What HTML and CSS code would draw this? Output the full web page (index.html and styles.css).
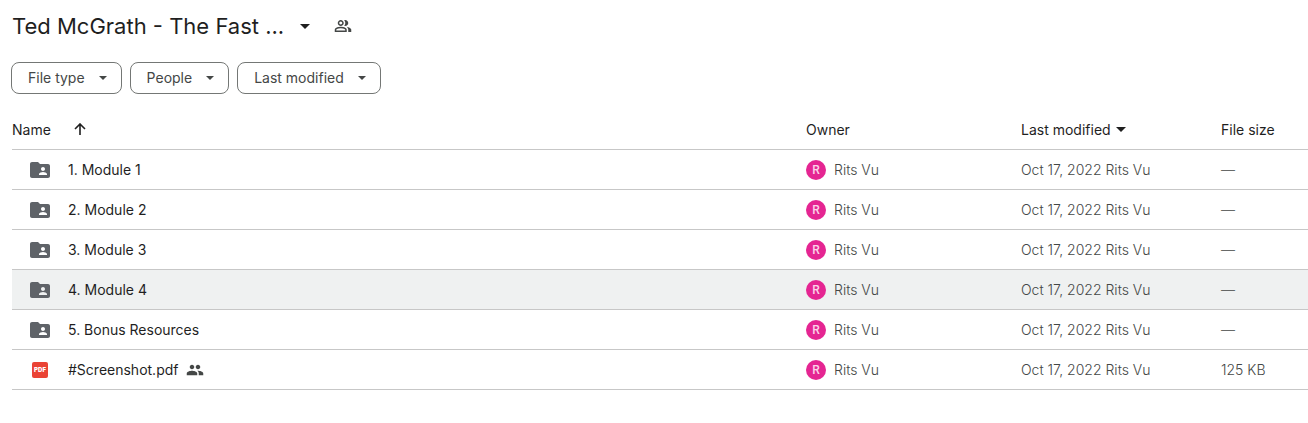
FILE: index.html
```html
<!DOCTYPE html>
<html lang="en">
<head>
<meta charset="utf-8">
<meta name="viewport" content="width=device-width, initial-scale=1">
<title>Ted McGrath - The Fast ...</title>
<link rel="stylesheet" href="styles.css">
</head>
<body>
<svg class="sprite" aria-hidden="true">
  <symbol id="folder" viewBox="0 0 24 24"><path d="M20 6h-8l-2-2H4c-1.100 0-2 .9-2 2v12c0 1.100.9 2 2 2h16c1.100 0 2-.9 2-2V8c0-1.100-.9-2-2-2zm-5 3c1.100 0 2 .9 2 2s-.9 2-2 2-2-.9-2-2 .9-2 2-2zm4 8h-8v-1c0-1.330 2.670-2 4-2s4 .67 4 2v1z"/></symbol>
  <symbol id="caret" viewBox="0 0 10 5"><path d="M0 0h10L5 5z"/></symbol>
</svg>
<main class="drive">
  <header class="heading">
    <h1 class="title"><button class="title-button" type="button">Ted McGrath - The Fast ...<svg class="caret caret-title" aria-hidden="true"><use href="#caret"/></svg></button></h1>
    <button class="share" type="button" aria-label="Manage access"><svg class="share-icon" viewBox="0 -960 960 960" aria-hidden="true"><path d="M40-160v-112q0-34 17.500-62.500T104-378q62-31 126-46.500T360-440q66 0 130 15.500T616-378q29 15 46.500 43.500T680-272v112H40Zm720 0v-120q0-44-24.500-84.500T666-434q51 6 96 20.500t84 35.500q36 20 55 44.500t19 53.500v120H760ZM360-480q-66 0-113-47t-47-113q0-66 47-113t113-47q66 0 113 47t47 113q0 66-47 113t-113 47Zm400-160q0 66-47 113t-113 47q-11 0-28-2.500t-28-5.500q27-32 41.500-71t14.500-81q0-42-14.500-81T544-792q14-5 28-6.500t28-1.500q66 0 113 47t47 113ZM120-240h480v-32q0-11-5.500-20T580-306q-54-27-109-40.500T360-360q-56 0-111 13.500T140-306q-9 5-14.500 14t-5.500 20v32Zm240-320q33 0 56.500-23.500T440-640q0-33-23.500-56.500T360-720q-33 0-56.500 23.500T280-640q0 33 23.500 56.500T360-560Z"/></svg></button>
  </header>
  <div class="filters">
    <button class="chip" type="button">File type<svg class="caret caret-chip" aria-hidden="true"><use href="#caret"/></svg></button>
    <button class="chip" type="button">People<svg class="caret caret-chip" aria-hidden="true"><use href="#caret"/></svg></button>
    <button class="chip" type="button">Last modified<svg class="caret caret-chip" aria-hidden="true"><use href="#caret"/></svg></button>
  </div>
  <table class="files">
    <colgroup><col><col class="col-owner"><col class="col-modified"><col class="col-size"></colgroup>
    <thead>
      <tr>
        <th scope="col"><button class="sort sort-name" type="button">Name<svg class="arrow" viewBox="0 0 12 14" aria-hidden="true"><path d="M6 12V1M1 6l5-5 5 5"/></svg></button></th>
        <th scope="col">Owner</th>
        <th scope="col"><button class="sort" type="button">Last modified<svg class="caret caret-title" aria-hidden="true"><use href="#caret"/></svg></button></th>
        <th scope="col">File size</th>
      </tr>
    </thead>
    <tbody>
      <tr>
        <td><div class="name"><svg class="folder" aria-hidden="true"><use href="#folder"/></svg>1. Module 1</div></td>
        <td><div class="owner"><span class="avatar" aria-hidden="true">R</span>Rits Vu</div></td>
        <td><div class="modified"><span>Oct 17, 2022</span><span>Rits Vu</span></div></td>
        <td>—</td>
      </tr>
      <tr>
        <td><div class="name"><svg class="folder" aria-hidden="true"><use href="#folder"/></svg>2. Module 2</div></td>
        <td><div class="owner"><span class="avatar" aria-hidden="true">R</span>Rits Vu</div></td>
        <td><div class="modified"><span>Oct 17, 2022</span><span>Rits Vu</span></div></td>
        <td>—</td>
      </tr>
      <tr>
        <td><div class="name"><svg class="folder" aria-hidden="true"><use href="#folder"/></svg>3. Module 3</div></td>
        <td><div class="owner"><span class="avatar" aria-hidden="true">R</span>Rits Vu</div></td>
        <td><div class="modified"><span>Oct 17, 2022</span><span>Rits Vu</span></div></td>
        <td>—</td>
      </tr>
      <tr class="active">
        <td><div class="name"><svg class="folder" aria-hidden="true"><use href="#folder"/></svg>4. Module 4</div></td>
        <td><div class="owner"><span class="avatar" aria-hidden="true">R</span>Rits Vu</div></td>
        <td><div class="modified"><span>Oct 17, 2022</span><span>Rits Vu</span></div></td>
        <td>—</td>
      </tr>
      <tr>
        <td><div class="name"><svg class="folder" aria-hidden="true"><use href="#folder"/></svg>5. Bonus Resources</div></td>
        <td><div class="owner"><span class="avatar" aria-hidden="true">R</span>Rits Vu</div></td>
        <td><div class="modified"><span>Oct 17, 2022</span><span>Rits Vu</span></div></td>
        <td>—</td>
      </tr>
      <tr>
        <td><div class="name"><span class="pdf" aria-hidden="true">PDF</span>#Screenshot.pdf<svg class="people" viewBox="0 0 24 24" role="img" aria-label="Shared"><path d="M16 11c1.660 0 2.990-1.340 2.990-3S17.660 5 16 5s-3 1.340-3 3 1.340 3 3 3zm-8 0c1.660 0 2.990-1.340 2.990-3S9.660 5 8 5 5 6.340 5 8s1.340 3 3 3zm0 2c-2.330 0-7 1.170-7 3.500V19h14v-2.500c0-2.330-4.670-3.500-7-3.500zm8 0c-.29 0-.62.02-.97.05 1.160.84 1.970 1.970 1.970 3.450V19h6v-2.500c0-2.330-4.670-3.500-7-3.500z"/></svg></div></td>
        <td><div class="owner"><span class="avatar" aria-hidden="true">R</span>Rits Vu</div></td>
        <td><div class="modified"><span>Oct 17, 2022</span><span>Rits Vu</span></div></td>
        <td>125 KB</td>
      </tr>
    </tbody>
  </table>
</main>
</body>
</html>
```
FILE: styles.css
```css
* { box-sizing: border-box; }

body {
  margin: 0;
  background: #fff;
  color: #1f1f1f;
  font: 400 14px/20px Inter, Roboto, "Liberation Sans", sans-serif;
}

button {
  padding: 0;
  border: 0;
  background: none;
  color: inherit;
  font: inherit;
  cursor: pointer;
}

svg { flex: none; fill: currentColor; }

.sprite { display: none; }

.drive { padding: 10px 0 0 12px; }

.heading {
  display: flex;
  align-items: center;
  gap: 24px;
  height: 32px;
}

.title { margin: 0; font: 400 22px/32px Inter, Roboto, sans-serif; }

.title-button {
  display: flex;
  align-items: center;
  gap: 16px;
}

.share { display: flex; color: #444746; }

.share-icon { width: 18px; height: 18px; }

.caret-title { width: 10px; height: 5px; }

.caret-chip { width: 8px; height: 4px; }

.filters {
  display: flex;
  gap: 8px;
  margin: 20px 0 16px -1px;
}

.chip {
  display: flex;
  align-items: center;
  gap: 14px;
  height: 32px;
  padding: 0 14px 0 16px;
  border: 1px solid #747775;
  border-radius: 8px;
  color: #444746;
}

.files {
  width: 100%;
  border-collapse: separate;
  border-spacing: 0;
  table-layout: fixed;
}

.col-owner { width: 215px; }
.col-modified { width: 200px; }
.col-size { width: 87px; }

.files th,
.files td {
  height: 40px;
  padding: 0;
  border-bottom: 1px solid #c7c7c7;
  text-align: left;
  white-space: nowrap;
}

.files th { font-weight: 400; }

.files td {
  color: #444746;
  font-weight: 300;
}

.active { background: #eff1f1; }

.sort {
  display: flex;
  align-items: center;
  gap: 5px;
}

.sort-name { gap: 23px; }

.arrow {
  width: 12px;
  height: 14px;
  fill: none;
  stroke: currentColor;
  stroke-width: 1.6;
}

.name {
  display: flex;
  align-items: center;
  padding-left: 16px;
  color: #1f1f1f;
  font-weight: 400;
}

.folder {
  width: 24px;
  height: 24px;
  margin-right: 16px;
  color: #5f6368;
}

.pdf {
  width: 16px;
  height: 16px;
  margin: 0 20px 0 4px;
  border-radius: 2px;
  background: #ea4335;
  color: #fff;
  font: 900 6px/16px Inter, sans-serif;
  text-align: center;
}

.people {
  width: 18px;
  height: 18px;
  margin-left: 8px;
  color: #444746;
}

.owner {
  display: flex;
  align-items: center;
  gap: 8px;
}

.avatar {
  width: 20px;
  height: 20px;
  border-radius: 50%;
  background: #e52592;
  color: #fbd3e8;
  font: 500 12px/20px Roboto, sans-serif;
  text-align: center;
}

.modified { display: flex; gap: 4px; }
```
